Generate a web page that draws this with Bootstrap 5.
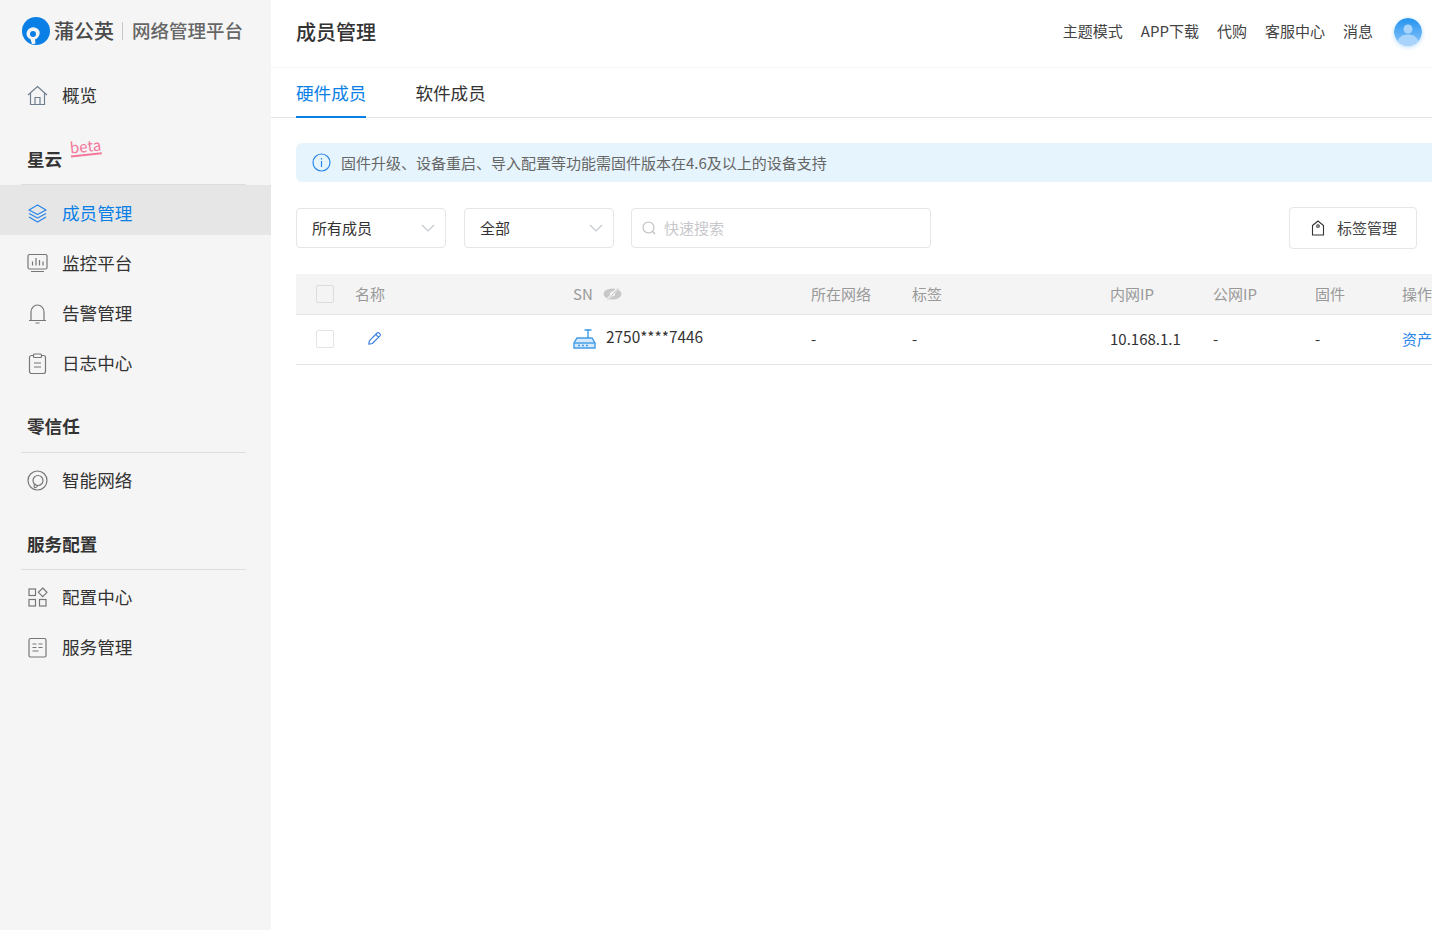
<!DOCTYPE html>
<html lang="zh-CN">
<head>
    <meta charset="UTF-8">
    <meta name="viewport" content="width=device-width, initial-scale=1.0">
    <title>成员管理</title>
    <link href="https://cdn.jsdelivr.net/npm/bootstrap@5.3.0/dist/css/bootstrap.min.css" rel="stylesheet">
    <style>
        html, body { height: 100%; overflow: hidden; }
        body { font-family: "Noto Sans CJK SC", "Noto Sans", sans-serif; font-size: 15px; color: #333; }
        .app-shell { height: 930px; }
        .side-bar { width: 271px; flex: none; background: #f5f5f5; }
        .brand-row { height: 62px; padding-left: 22px; }
        .brand-name { font-size: 20px; font-weight: 500; color: #4a4a4a; line-height: 1; }
        .brand-sep { width: 1px; height: 18px; background: #c8c8c8; margin: 0 9px 0 8px; }
        .brand-sub { font-size: 18.500px; font-weight: 500; color: #666; line-height: 1; margin-top: -1px; }
        .menu-row { height: 50px; padding: 5px 0 0 27px; font-size: 17.600px; color: #333; gap: 14px; }
        .menu-row.home-row { margin-top: 8px; padding-top: 0; }
        .menu-row.low-row { padding-top: 7px; }
        .menu-row.active-row { background: #e6e6e6; color: #0a7fe6; }
        .menu-row svg { width: 21px; height: 21px; flex: none; }
        .group-head { height: 39px; margin: 28px 25px 0 21px; padding-left: 6px; border-bottom: 1px solid #dedede; font-size: 17.600px; font-weight: 700; line-height: 26px; color: #333; position: relative; }
        .group-head.star-head { margin-top: 26px; }
        .group-head.zero-head { margin-top: 29px; line-height: 24px; }
        .group-head.svc-head { line-height: 25px; }
        .beta-tag { position: absolute; left: 49px; top: -8px; height: 18px; font-size: 15px; font-weight: 400; line-height: 16px; color: #f4779c; border-bottom: 2px solid #f4779c; transform: rotate(-6deg); }
        .top-strip { height: 68px; padding: 0 10px 3px 25px; border-bottom: 1px solid #f7f7f7; }
        .page-name { font-size: 20px; font-weight: 500; color: #333; }
        .top-links { gap: 18px; color: #444; }
        .top-links span { position: relative; top: -1px; }
        .avatar-dot { width: 28px; height: 28px; margin-left: 3px; border-radius: 50%; box-shadow: 0 1px 4px rgba(90,170,250,.45); overflow: hidden; }
        .tab-strip { height: 50px; padding-left: 25px; border-bottom: 1px solid #e4e4e4; gap: 49px; font-size: 17.600px; }
        .tab-item { height: 50px; line-height: 49px; color: #333; }
        .tab-item.on { color: #0a7fe6; border-bottom: 2px solid #0a7fe6; }
        .body-area { padding-left: 25px; }
        .tip-bar { height: 39px; margin-top: 25px; background: #e6f5fd; border-radius: 6px 0 0 6px; padding-left: 16px; color: #666; gap: 10px; }
        .tip-bar span { padding-top: 1px; }
        .filter-row { height: 42px; margin-top: 25px; padding-right: 15px; }
        .pick-box { width: 150px; height: 40px; border: 1px solid #e6e6e6; border-radius: 4px; padding: 0 10px 0 15px; margin-right: 18px; color: #333; }
        .find-box { width: 300px; height: 40px; margin-left: -1px; border: 1px solid #e6e6e6; border-radius: 4px; padding-left: 10px; gap: 8px; color: #c8c8cc; }
        .tag-btn { width: 128px; height: 42px; padding-left: 21px; border: 1px solid #e6e6e6; border-radius: 4px; background: #fff; color: #444; gap: 12px; font-size: 15px; }
        .grid-wrap { margin-top: 25px; width: 1136px; overflow: hidden; }
        .member-grid { width: 1208px; table-layout: fixed; margin: 0; }
        .member-grid th { height: 40px; padding: 0; background: #f4f4f4; border-bottom: 1px solid #e4e4e4; color: #999; font-weight: 400; font-size: 15px; vertical-align: middle; }
        .member-grid td { height: 50px; padding: 0; border-bottom: 1px solid #e4e4e4; color: #333; font-size: 15px; vertical-align: middle; }
        .member-grid td.link-blue { color: #2a86e8; }
        .tick-box { display: block; width: 18px; height: 18px; margin-left: 20px; border: 1px solid #e4e4e4; border-radius: 2px; background: #fff; }
        th .tick-box { background: #f4f4f4; border-color: #dcdcdc; }
        .eye-wrap { gap: 10px; }
        .edit-icon { margin: -4px 0 0 12px; }
        .sn-cell { gap: 10px; }
        .sn-cell span { position: relative; top: -2px; font-size: 15.400px; }
    </style>
</head>
<body>
    <div class="app-shell d-flex">
        <aside class="side-bar">
            <div class="brand-row d-flex align-items-center">
                <svg class="me-1" width="28" height="28" viewBox="0 0 28 28"><circle cx="14" cy="14" r="14" fill="#0a7fe6"/><path d="M4.500 17a6.800 6.800 0 0 1 11-5.300c2 1.500 2.500 3.500 2 5.500-.5 2.500-2.500 4.500-4.500 5.300l.5 4.200-3.500.3-1.500-4.800c-2.500-1-4-3-4-5.200z" fill="#f5f5f5"/><circle cx="11" cy="17" r="3" fill="#0a7fe6"/></svg>
                <span class="brand-name">蒲公英</span>
                <span class="brand-sep"></span>
                <span class="brand-sub">网络管理平台</span>
            </div>
            <div class="menu-row home-row d-flex align-items-center">
                <svg viewBox="0 0 21 21" fill="none" stroke="#6f7f8f" stroke-width="1.200"><path d="M1 10 10.500 1.500 20 10M3.500 8v11.500h14V8M8 19.500v-7h5v7"/></svg>
                <span>概览</span>
            </div>
            <div class="group-head star-head">星云<span class="beta-tag">beta</span></div>
            <div class="menu-row low-row active-row d-flex align-items-center">
                <svg viewBox="0 0 21 21" fill="none" stroke="#2a86e8" stroke-width="1.300" stroke-linejoin="round"><path d="M10.500 2 19 7l-8.500 4.500L2 7zM2 10.500l8.500 4.500 8.500-4.500M2 14l8.500 5 8.500-5"/></svg>
                <span>成员管理</span>
            </div>
            <div class="menu-row low-row d-flex align-items-center">
                <svg viewBox="0 0 21 21" fill="none" stroke="#777" stroke-width="1.200"><rect x="1" y="1.500" width="19" height="14.500" rx="1.500"/><path d="M5.500 12.500V8.500M9 12.500V5M12.500 12.500V7M16 12.500V8.500M4 18.500h13"/></svg>
                <span>监控平台</span>
            </div>
            <div class="menu-row low-row d-flex align-items-center">
                <svg viewBox="0 0 21 21" fill="none" stroke="#777" stroke-width="1.200"><path d="M2 17.500h17M4 17.500V9a6.500 7 0 0 1 13 0v8.500M8.500 20h4"/></svg>
                <span>告警管理</span>
            </div>
            <div class="menu-row low-row d-flex align-items-center">
                <svg viewBox="0 0 21 21" fill="none" stroke="#777" stroke-width="1.200"><rect x="2.500" y="2.500" width="16" height="18" rx="2"/><rect x="6.500" y="1" width="8" height="3.500" rx="1" fill="#f5f5f5"/><path d="M7 10h7M7 14h7"/></svg>
                <span>日志中心</span>
            </div>
            <div class="group-head zero-head">零信任</div>
            <div class="menu-row d-flex align-items-center">
                <svg viewBox="0 0 21 21" fill="none" stroke="#777" stroke-width="1.200"><circle cx="10.500" cy="10.500" r="9.500"/><circle cx="11" cy="10.500" r="5"/><path d="M7.500 14c-.5 1.500-.8 2.500 0 3.500 1 .5 2.500-.5 3.500-2"/></svg>
                <span>智能网络</span>
            </div>
            <div class="group-head svc-head">服务配置</div>
            <div class="menu-row d-flex align-items-center">
                <svg viewBox="0 0 21 21" fill="none" stroke="#777" stroke-width="1.200"><rect x="2" y="2" width="6.500" height="6.500"/><rect x="2" y="12.500" width="6.500" height="6.500"/><rect x="12.500" y="12.500" width="6.500" height="6.500"/><path d="M15.700 1 20 5.300l-4.300 4.300-4.300-4.300z"/></svg>
                <span>配置中心</span>
            </div>
            <div class="menu-row d-flex align-items-center">
                <svg viewBox="0 0 21 21" fill="none" stroke="#777" stroke-width="1.200"><rect x="2" y="1.500" width="17" height="18.500" rx="1.500"/><path d="M5.500 7h4M11.500 7h4M5.500 10.500h4M11.500 10.500h4M5.500 14h6"/></svg>
                <span>服务管理</span>
            </div>
        </aside>
        <main class="flex-grow-1 overflow-hidden">
            <header class="top-strip d-flex align-items-center justify-content-between">
                <div class="page-name">成员管理</div>
                <div class="top-links d-flex align-items-center">
                    <span>主题模式</span><span>APP下载</span><span>代购</span><span>客服中心</span><span>消息</span>
                    <div class="avatar-dot">
                        <svg width="28" height="28" viewBox="0 0 28 28"><defs><linearGradient id="avFill" x1="0" y1="0" x2="0" y2="1"><stop offset="0" stop-color="#2393ee"/><stop offset="1" stop-color="#8cc6fb"/></linearGradient></defs><circle cx="14" cy="14" r="14" fill="url(#avFill)"/><circle cx="14" cy="11" r="4.500" fill="#a8d4fb"/><path d="M3 25c1-6 6-8.500 11-8.500S24 19 25 25a14 14 0 0 1-22 0z" fill="#a8d4fb"/></svg>
                    </div>
                </div>
            </header>
            <nav class="tab-strip d-flex">
                <div class="tab-item on">硬件成员</div>
                <div class="tab-item">软件成员</div>
            </nav>
            <section class="body-area">
                <div class="tip-bar d-flex align-items-center">
                    <svg width="19" height="19" viewBox="0 0 19 19" fill="none" stroke="#2a86e8" stroke-width="1.200"><circle cx="9.500" cy="9.500" r="8.500"/><path d="M9.500 8v6M9.500 5v1.500"/></svg>
                    <span>固件升级、设备重启、导入配置等功能需固件版本在4.6及以上的设备支持</span>
                </div>
                <div class="filter-row d-flex align-items-center">
                    <div class="pick-box d-flex align-items-center justify-content-between">
                        <span>所有成员</span>
                        <svg width="14" height="8" viewBox="0 0 14 8" fill="none" stroke="#c4c8d0" stroke-width="1.200"><path d="M1 1l6 6 6-6"/></svg>
                    </div>
                    <div class="pick-box d-flex align-items-center justify-content-between">
                        <span>全部</span>
                        <svg width="14" height="8" viewBox="0 0 14 8" fill="none" stroke="#c4c8d0" stroke-width="1.200"><path d="M1 1l6 6 6-6"/></svg>
                    </div>
                    <div class="find-box d-flex align-items-center">
                        <svg width="14" height="14" viewBox="0 0 14 14" fill="none" stroke="#bbb" stroke-width="1.100"><circle cx="6.500" cy="6.500" r="5.500"/><path d="M10.500 10.500l2.500 2.500"/></svg>
                        <span>快速搜索</span>
                    </div>
                    <button class="tag-btn d-flex align-items-center ms-auto" type="button">
                        <svg width="14" height="16" viewBox="0 0 13 16" fill="none" stroke="#333" stroke-width="1.100"><path d="M1 5.500 6.500 1 12 5.500V15H1z"/><circle cx="6.500" cy="6" r="1.300"/></svg>
                        <span>标签管理</span>
                    </button>
                </div>
                <div class="grid-wrap">
                    <table class="table member-grid">
                        <colgroup>
                            <col style="width:59px"><col style="width:218px"><col style="width:238px"><col style="width:101px"><col style="width:198px"><col style="width:103px"><col style="width:102px"><col style="width:87px"><col style="width:102px">
                        </colgroup>
                        <thead>
                            <tr>
                                <th><span class="tick-box"></span></th>
                                <th>名称</th>
                                <th>
                                    <span class="eye-wrap d-flex align-items-center">SN
                                        <svg width="19" height="14" viewBox="0 0 19 14"><ellipse cx="9.500" cy="7" rx="9" ry="5.500" fill="#c8c8c8"/><circle cx="9.500" cy="7" r="2.500" fill="#f4f4f4"/><path d="M4 13 15 1" stroke="#f4f4f4" stroke-width="2.500"/><path d="M4.500 13 15.500 1" stroke="#c8c8c8" stroke-width="1"/></svg>
                                    </span>
                                </th>
                                <th>所在网络</th>
                                <th>标签</th>
                                <th>内网IP</th>
                                <th>公网IP</th>
                                <th>固件</th>
                                <th>操作</th>
                            </tr>
                        </thead>
                        <tbody>
                            <tr>
                                <td><span class="tick-box"></span></td>
                                <td>
                                    <svg class="edit-icon" width="15" height="15" viewBox="0 0 17 17" fill="none" stroke="#3b7fe0" stroke-width="1.300" stroke-linejoin="round"><path d="M2 15l.8-4L11.500 2.300a1.600 1.600 0 0 1 2.300 0l.9.900a1.600 1.600 0 0 1 0 2.300L6 14.200zM10 4l3 3"/></svg>
                                </td>
                                <td>
                                    <div class="sn-cell d-flex align-items-center">
                                        <svg width="23" height="21" viewBox="0 0 23 21" fill="none" stroke="#3f9be6" stroke-width="1.400"><path d="M15 1v9M11.500 2h7"/><path d="M4 10h15l3 5v5H1v-5z" fill="#d6eafb"/><path d="M1 15h21"/><path d="M5 17.500h2M9 17.500h2M13 17.500h2" stroke-width="1.500"/></svg>
                                        <span>2750****7446</span>
                                    </div>
                                </td>
                                <td>-</td>
                                <td>-</td>
                                <td>10.168.1.1</td>
                                <td>-</td>
                                <td>-</td>
                                <td class="link-blue">资产</td>
                            </tr>
                        </tbody>
                    </table>
                </div>
            </section>
        </main>
    </div>
    <script src="https://cdn.jsdelivr.net/npm/bootstrap@5.3.0/dist/js/bootstrap.bundle.min.js"></script>
</body>
</html>
